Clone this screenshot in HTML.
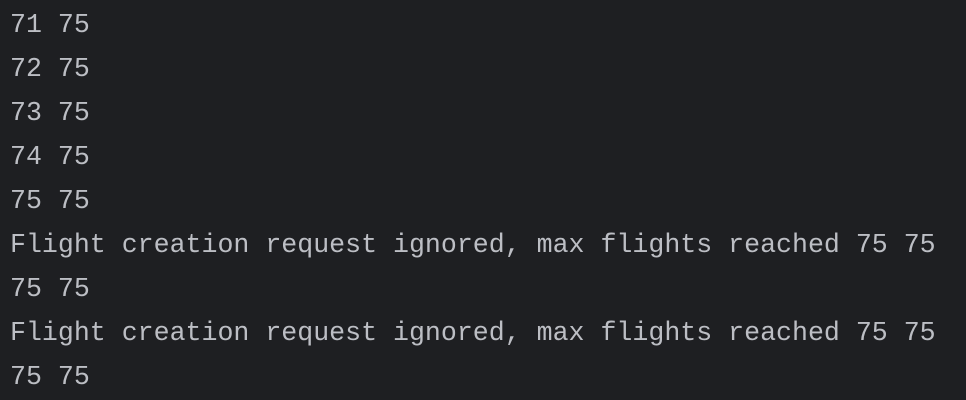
<!DOCTYPE html>
<html><head><style>
html,body{margin:0;padding:0;background:#1e1f22;width:966px;height:400px;overflow:hidden}
pre{margin:0;padding:3px 0 0 10px;font-family:"Liberation Mono","DejaVu Sans Mono",monospace;font-size:26.6px;line-height:44px;color:#bcbec4}
</style></head><body><pre>71 75
72 75
73 75
74 75
75 75
Flight creation request ignored, max flights reached 75 75
75 75
Flight creation request ignored, max flights reached 75 75
75 75</pre></body></html>
